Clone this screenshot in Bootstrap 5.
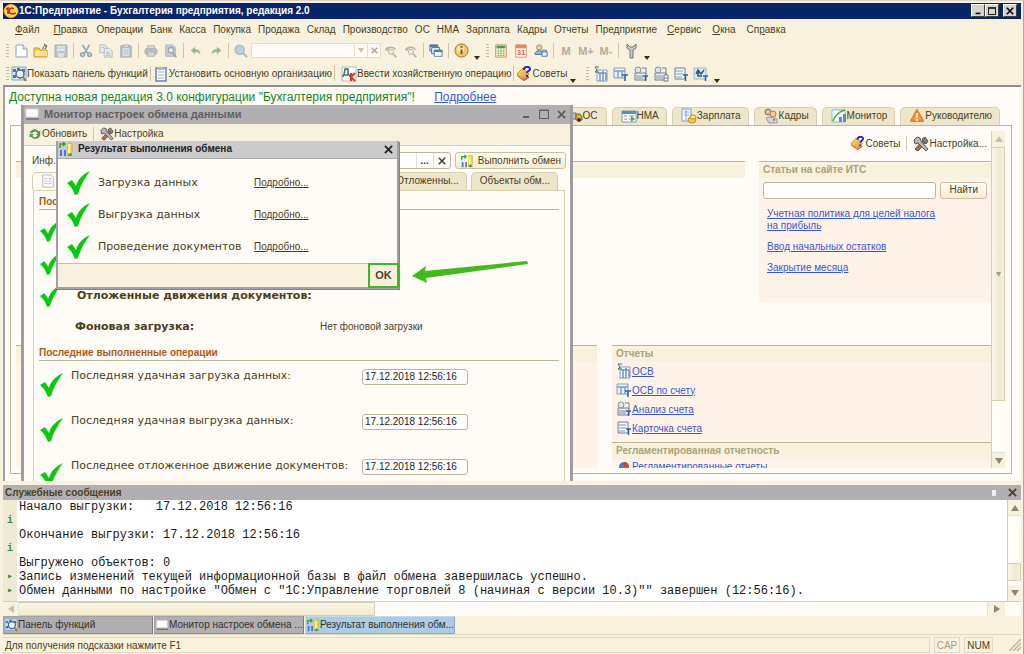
<!DOCTYPE html>
<html lang="ru">
<head>
<meta charset="utf-8">
<meta name="viewport" content="width=device-width, initial-scale=1">
<title>1С:Предприятие - Бухгалтерия предприятия, редакция 2.0</title>
<link href="https://cdn.jsdelivr.net/npm/bootstrap@5.3.0/dist/css/bootstrap.min.css" rel="stylesheet">
<style>
:root{--cream:#f7f1de;--paper:#fffbf7;--ink:#4b3f1c;--line:#bdb694;--steel:#b1afb2;--blush:#fff3e9}
body{font:10px/14px "Liberation Sans",Arial,sans-serif;color:var(--ink);background:var(--cream)}
button,input{font:inherit;color:inherit}
button{border:0;background:none;padding:0;white-space:nowrap}
svg{flex:none;display:block}
.i16{width:16px;height:16px}
.app{height:100vh;padding:2px 2px 0 3px;border-top:1px solid #d5d2c8;border-right:1px solid #aaa9ad}
.titlebar{height:16px;background:#0a246a;color:#fff;font-weight:700}
.sysbtn{width:14px;height:13px;background:#d6d3ce;border:1px solid #fff;border-right-color:#404040;border-bottom-color:#404040;color:#000}
.menubar{height:22px;padding-left:9px}
.menubar a{color:inherit;text-decoration:none;padding:0 4px 0 3px}
.menubar a.wide{padding:0 5px 0 6px}
.bar{height:21px}.bar.second{height:24px;padding-top:2px}
.grip{width:8px;height:13px;background:repeating-linear-gradient(#c2bb99 0 1px,transparent 1px 3px) center/3px 100% no-repeat}
.tool{width:20px;height:20px;display:flex;align-items:center;justify-content:center}
.tool.off{opacity:.5}
.tool.mem{font-weight:700;color:#b3ad9a;font-size:11px}
.div{width:5px;height:15px;background:linear-gradient(#cdc6a8,#cdc6a8) center/1px 100% no-repeat}
.caret{width:12px;height:18px;display:flex;align-items:flex-end;justify-content:center}
.caret::after{content:"";border:3px solid transparent;border-top:4px solid #3c2d10;border-bottom:0}
.combo{width:130px;height:15px;border:1px solid #e5dfca;background:var(--paper)}
.combo input{border:0;background:none;min-width:0;padding:0;height:13px}
.combo button{width:13px;flex:none;border-left:1px solid #e5dfca;color:#a9a490;font-weight:700;display:flex;align-items:center;justify-content:center}
.workspace{background:var(--paper);border:2px solid #8f8d8e;border-width:2px 0 0 2px;border-left-color:#a3a0a3;position:relative;overflow:hidden;padding:0 9px 7px 4px}
.notice{font-size:12px;line-height:16px;padding:2px 0 2px 0;color:#168423}
a.lnk,.notice a{color:#3656dd;text-decoration:underline}
.ftab{height:18px;border:1px solid #d6cfae;border-bottom:0;border-radius:5px 5px 0 0;background:#ede6cb;padding:0 7px 0 8px}
.tabs-main{gap:5px;padding-right:12px}
.page{border:1px solid var(--line);margin-left:1px;padding:5px 6px 5px 5px;background:var(--paper)}
.vscroll{width:14px;border-left:1px solid #d5cfb3;background:#fffdf6}
.vscroll .end{height:16px;background:var(--cream)}
.thumb{background:linear-gradient(90deg,#faf6e8,#efe8cb 60%,#f7f1d8);border:1px solid #d5cfb3;border-left:0}
.up,.down,.left,.right{border:4px solid transparent;width:0;height:0}
.up{border-bottom:6px solid #8b8774;border-top:0}.down{border-top:6px solid #8b8774;border-bottom:0}
.left{border-right:6px solid #c5bfa6;border-left:0}.right{border-left:6px solid #8b8774;border-right:0}
.combo .down{border-width:5px 3px 0;opacity:.5}
.pale{opacity:.45}
.pane-a{display:grid;grid-template-columns:1fr 232px;column-gap:14px;height:184px;flex:none;align-items:start}
.pane-b{display:grid;grid-template-columns:1fr 379px;column-gap:15px}
.sect{border-top:1px solid var(--line)}
.sect h2{margin:0;font-size:10px;line-height:15px;height:16px;font-weight:700;color:#aaa477;background:var(--cream);padding-left:4px}
.blush{background:var(--blush)}
.articles{padding:9px 8px 28px;gap:9px;line-height:12px}
.soft{border:1px solid #c9c19b;border-radius:3px;background:linear-gradient(#fffdf5,#f3ecd3)}
.field{border:1px solid var(--line);border-radius:3px;background:#fff;min-width:0;padding:0 2px}
.win{position:absolute}
.monitor{left:16px;top:18px;width:552px;height:388px;border:3px solid #9f9ca0;border-top:0;background:var(--paper)}
.monitor>*{flex:none}
.monitor>header{height:19px;background:var(--steel);color:#615d5d;font-weight:700;font-size:11px}
.monitor .tools{height:22px;background:var(--cream);border-bottom:1px solid #d5cfb3}
.sheet{border:1px solid #d8d1ae;border-bottom:0;margin:0 5px 0 9px;padding:0 5px}
.grouphead{margin:0;font-size:10px;line-height:13px;font-weight:700;color:#a95a16;border-bottom:1px solid var(--line);padding-bottom:1px}
.verd{font-family:"DejaVu Sans",Verdana,sans-serif;font-size:11px}
.orow{height:45px}
.orow .verd{width:291px}
.result{left:51px;top:54px;width:343px;height:148px;border:2px solid #a2a0a3;border-top:0;background:var(--paper);box-shadow:1px 1px 0 #858386}
.result>*{flex:none}
.result>header{height:18px;background:#cbcbcd;color:#222;font-weight:700;border-bottom:1px solid #aaa}
.rrow{height:32px;padding-left:8px}
.rrow .verd{width:156px}
.rrow a{color:inherit}
.result>footer{height:24px;background:var(--cream);border-top:1px solid #c9c19b;margin-top:auto}
.ok{width:31px;height:25px;border:2px solid #44b629;font-weight:700;font-size:11px;margin:-1px -2px 0 0;background:var(--cream)}
.arrow{left:407px;top:173px}
.msgs{margin-top:4px}
.msgs>header{height:15px;background:var(--steel);font-weight:700;padding-left:2px}
.pin{width:4px;height:6px;background:#eee}
.msgbody{height:102px;background:#fff;font:12px/14px "Liberation Mono","Courier New",monospace;color:#1a1a1a;border-bottom:1px solid #d5cfb3}
.msgbody pre{margin:0;font:inherit;overflow:hidden}
.msgbody pre.gutter{width:14px;margin-right:2px;flex:none;background:#efead4;color:#3f8a37;font-weight:700;font-size:10px;text-align:center}
.hscroll{height:14px;background:var(--paper)}
.task{width:150px;height:18px;background:#b1afb2;border:1px solid #a3a1a4;border-right-color:#7e7c7f;border-bottom-color:#8f8d8f;color:#363029;overflow:hidden}
.task.on{background:#aecbe3;border-color:#c2d9ea #8dabc4 #8dabc4 #c2d9ea}
.status{height:20px;border-top:1px solid #dfd9c0}
.cell{height:16px;border:1px solid #e0dac1;padding:0 2px;line-height:15px}
</style>
</head>
<body>
<svg width="0" height="0" class="position-absolute" aria-hidden="true">
<defs>
<linearGradient id="gold" x1="0" y1="0" x2="1" y2="1"><stop offset="0" stop-color="#ffe98a"/><stop offset="1" stop-color="#dd8a18"/></linearGradient>
<symbol id="doc" viewBox="0 0 16 16"><path d="M3 2h7l4 4v8H3z" fill="#fff" stroke="#8ba3bd"/><path d="M10 2v4h4" fill="#dce8f2" stroke="#8ba3bd"/></symbol>
<symbol id="sheeticon" viewBox="0 0 16 16"><path d="M2 1h9l3 3v11H2z" fill="#fff" stroke="#a9a9b4"/><path d="M4 5h3M4 8h3M4 11h3" stroke="#a9b4c4"/><path d="M9 5h3M9 8h3M9 11h3" stroke="#dc8e9c"/></symbol>
<symbol id="folder" viewBox="0 0 16 16"><path d="M1 5h5l1 2h7v7H1z" fill="#f4cd5c" stroke="#c8963a"/><path d="M2 8h12v5H2z" fill="#fbe291"/><path d="M10 6c0-3 1-3 3-3M11 1l3 2-2 3" fill="none" stroke="#55503a"/></symbol>
<symbol id="disk" viewBox="0 0 16 16"><path d="M2 2h12v12H2z" fill="#7f98b8" stroke="#58708e"/><path d="M4 3h8v5H4z" fill="#cfdbe8"/><path d="M5 10h6v4H5z" fill="#ccd"/><path d="M4 5h8" stroke="#92a5ba"/></symbol>
<symbol id="cut" viewBox="0 0 16 16"><path d="M4 1l6 10M12 1L6 11" stroke="#35658f" stroke-width="2"/><g fill="none" stroke="#35658f" stroke-width="2"><circle cx="4" cy="12" r="2"/><circle cx="12" cy="12" r="2"/></g></symbol>
<symbol id="copy" viewBox="0 0 16 16"><g fill="#dde8f4" stroke="#5a7eab"><path d="M1 1h6l2 2v7H1z"/><path d="M6 5h6l3 3v7H6z"/></g><path d="M8 9h4M8 11h5M8 13h5M3 4h3" stroke="#5a7eab"/></symbol>
<symbol id="clip" viewBox="0 0 16 16"><path d="M2 2h12v13H2z" fill="#708db8" stroke="#4c6795"/><path d="M4 4h8v10H4z" fill="#b9cbe2"/><path d="M5 1h6v3H5z" fill="#bcc7d5" stroke="#607287"/><path d="M6 7h5M6 9h5M6 11h5" stroke="#7d98bd"/></symbol>
<symbol id="print" viewBox="0 0 16 16"><path d="M4 2h8v4H4z" fill="#c5ccd6" stroke="#687688"/><rect x="1" y="5" width="14" height="7" rx="3" fill="#7c8a9e" stroke="#5d697b"/><path d="M4 9h8v5H4z" fill="#b4bfcc" stroke="#687688"/></symbol>
<symbol id="view" viewBox="0 0 16 16"><path d="M2 1h8l3 3v10H2z" fill="#8fa9cb" stroke="#617da4"/><circle cx="8" cy="7" r="3" fill="#e8f2fa" stroke="#495f7c" stroke-width="1.5"/><path d="M10 10l4 5" stroke="#495f7c" stroke-width="2"/></symbol>
<symbol id="undo" viewBox="0 0 16 16"><path d="M2 7l5-4v3c4 0 6 2 6 6-1-2-3-3-6-3v3z" fill="#3f8258"/></symbol>
<symbol id="lens" viewBox="0 0 16 16"><circle cx="6.500" cy="6.500" r="5" fill="#8cb2df" stroke="#6486b0" stroke-width="2"/><path d="M10 10l5 5" stroke="#8b8175" stroke-width="2.500"/></symbol>
<symbol id="again" viewBox="0 0 16 16"><path d="M1 7c1-5 11-6 13 0l-3-1c-2-2-5-2-7 2z" fill="#727e75"/><circle cx="8" cy="9" r="3" fill="#dee4e2" stroke="#727e75"/><path d="M10 11l4 4" stroke="#727e75" stroke-width="2"/></symbol>
<symbol id="wins" viewBox="0 0 16 16"><g fill="#dbeaf8" stroke="#426f9e"><path d="M1 1h9v7H1z"/><path d="M3 4h9v7H3z"/><path d="M6 7h9v7H6z" fill="#fff"/></g><path d="M1 2h9M6 8h9" stroke="#426f9e" stroke-width="2"/></symbol>
<symbol id="info" viewBox="0 0 16 16"><circle cx="8" cy="8" r="7" fill="#f3c667" stroke="#9d762c"/><circle cx="7" cy="6" r="4" fill="#fff" opacity=".45"/><path d="M8 7v5M8 3v2" stroke="#79531a" stroke-width="2"/></symbol>
<symbol id="calc" viewBox="0 0 16 16"><path d="M2 1h12v14H2z" fill="#fff5d7" stroke="#b48d4d"/><path d="M3 2h10v3H3z" fill="#4e9856"/><path d="M4 7h2M7 7h2M10 7h2M4 9h2M7 9h2M4 11h2M7 11h2M4 13h2M7 13h2" stroke="#4e9856"/><path d="M10 9h2M10 11h2M10 13h2" stroke="#d05634"/></symbol>
<symbol id="cal" viewBox="0 0 16 16"><path d="M2 1h12v14H2z" fill="#fff" stroke="#cc8a68"/><path d="M2 1h12v4H2z" fill="#e78b5c"/><text x="3" y="13" font-size="9" font-weight="700" fill="#dc5936" font-family="Liberation Sans">31</text></symbol>
<symbol id="user" viewBox="0 0 16 16"><circle cx="6" cy="4" r="3" fill="#ecd28a" stroke="#77879a"/><path d="M1 12c0-6 10-6 10 0z" fill="#8eb2d6" stroke="#567694"/><path d="M9 9h6v5H9z" fill="#e8eef5" stroke="#466c98"/><path d="M10 9V7h4v2" fill="none" stroke="#466c98"/></symbol>
<symbol id="wrench" viewBox="0 0 16 16"><path d="M4 1v4l3 2v8h3V7l3-2V1l-3 3H7z" fill="#c9cbc5" stroke="#72746e"/></symbol>
<symbol id="panel" viewBox="0 0 16 16"><path d="M1 1h14v13H1z" fill="#dceafa" stroke="#7fa2cf"/><path d="M2 3h3v3H2zM6 2h3v2H6zM11 3h3v3h-3zM2 9h3v3H2z" fill="#4177c6"/><circle cx="9" cy="8" r="4" fill="#eef7ff" stroke="#516984" stroke-width="1.500"/><path d="M12 11l3 4" stroke="#b37426" stroke-width="2"/></symbol>
<symbol id="board" viewBox="0 0 16 16"><path d="M3 2h10v13H3z" fill="#fff" stroke="#6481b3" stroke-width="1.500"/><path d="M5 1h6v3H5z" fill="#a6b6d0"/><path d="M5 6h6M5 9h6M5 12h6" stroke="#97a9c8"/></symbol>
<symbol id="dk" viewBox="0 0 16 16"><path d="M1 1h14v14H1z" fill="#fff" stroke="#bcb8b4"/><path d="M2 9h7M3 9l1-6h3v6M2 9v2M9 9v2" fill="none" stroke="#317f5c" stroke-width="1.600"/><path d="M10 7v8M14 7l-4 4 4 4" fill="none" stroke="#df302b" stroke-width="2"/></symbol>
<symbol id="advice" viewBox="0 0 16 16"><path d="M1 8l6-6 6 6-5 6z" fill="url(#gold)" stroke="#d18a1c"/><path d="M1 9l7 5 5-4v2l-5 3-7-5z" fill="#c6502a"/><path d="M8 4c0-4 6-4 6-1 0 2-3 2-3 4M11 9v2" fill="none" stroke="#2420ce" stroke-width="2"/></symbol>
<symbol id="rep1" viewBox="0 0 16 16"><path d="M4 4h10v11H4z" fill="#fff" stroke="#7f98b8"/><path d="M5 7h8M7 7v8M10 5v10M13 7v7" stroke="#6a92c6" stroke-width="1.500"/><path d="M6 1H2l2 3-2 2h4" fill="none" stroke="#367368"/></symbol>
<symbol id="rep2" viewBox="0 0 16 16"><path d="M1 2h11v10H1z" fill="#eaf1f8" stroke="#8b9bb2"/><path d="M1 5h11M5 5v7M9 5v7" stroke="#7b9bcb" stroke-width="1.500"/><path d="M9 9h6M12 9v6" stroke="#2864a4" stroke-width="1.500"/></symbol>
<symbol id="rep3" viewBox="0 0 16 16"><path d="M2 7h11v7H2z" fill="#e9eef3" stroke="#73808f"/><path d="M3 10h7M3 12h7" stroke="#8390a2"/><circle cx="5" cy="4" r="3" fill="#dce5ee" stroke="#8390a0"/><path d="M9 2h4v6" fill="none" stroke="#73808f"/><path d="M10 10h5M12.500 10v5" stroke="#2864a4" stroke-width="1.500"/></symbol>
<symbol id="rep3b" viewBox="0 0 16 16"><path d="M2 7h11v7H2z" fill="#e9eef3" stroke="#73808f"/><path d="M3 10h7M3 12h7" stroke="#8390a2"/><circle cx="5" cy="4" r="3" fill="#dce5ee" stroke="#8390a0"/><path d="M9 2h4v6" fill="none" stroke="#73808f"/><path d="M11 9h4v6h-4zM11 12h4" fill="#fff" stroke="#667890"/></symbol>
<symbol id="rep4" viewBox="0 0 16 16"><path d="M2 2h10v11H2z" fill="#f4f7fa" stroke="#70839a"/><path d="M2 5h8M3 8h7M3 11h6" stroke="#849bb6"/><path d="M10 9h5M12.500 9v6" stroke="#2864a4" stroke-width="1.500"/></symbol>
<symbol id="rep5" viewBox="0 0 16 16"><path d="M1 2h12v11H1z" fill="#dfe9f2" stroke="#a3b3c6"/><path d="M3 8l2-4 3 4 3-4M5 5v5h4" fill="none" stroke="#365675" stroke-width="1.500"/><path d="M10 10h5M12.500 10v5" stroke="#2864a4" stroke-width="1.500"/></symbol>
<symbol id="tools" viewBox="0 0 16 16"><path d="M2 13L11 3l3 2L5 15z" fill="#a5714e" stroke="#66483b"/><path d="M1 4l3-3 3 1 1 3 7 8-2 2-8-8-3 1z" fill="#b5b5b5" stroke="#555"/><path d="M9 3l3-2 3 4-2 3z" fill="#858585" stroke="#555"/></symbol>
<symbol id="screen" viewBox="0 0 16 16"><path d="M2 3h12v8H2z" fill="#fff" stroke="#d8d8dc"/><path d="M2 13h13" stroke="#757176" stroke-width="1.500"/></symbol>
<symbol id="refresh" viewBox="0 0 16 16"><path d="M2 7c1-5 8-6 10-2l2-1v5H9l2-2c-2-3-5-2-6 0zM14 9c-1 5-8 6-10 2l-2 1V8h5l-2 2c2 3 5 2 6-1z" fill="#4f9651"/></symbol>
<symbol id="exchange" viewBox="0 0 16 16"><path d="M10 2h4v10l-2 2h-2z" fill="#f3dc51" stroke="#cdb036"/><path d="M10 3h2v9h-2z" fill="#fff4a4"/><path d="M2 9h2v6H2zM6 9h2v6H6z" fill="#4a79d3"/><path d="M2 7V3h4M5 1l2 2-2 2M10 14h4M12 12v3" fill="none" stroke="#3b9f37" stroke-width="1.500"/></symbol>
<symbol id="check" viewBox="0 0 24 24"><path d="M1 12l5-3 4 6C12 8 16 4 24 0 18 8 14 16 12 23l-3 1C7 19 5 15 1 12z" fill="#0ac812"/></symbol>
<symbol id="truck" viewBox="0 0 16 16"><path d="M1 5h8v6H1z" fill="#b6c2c8" stroke="#727c82"/><path d="M9 6h4l2 3v3H9z" fill="#ddb23f" stroke="#765e24"/><circle cx="4" cy="12" r="2" fill="#333"/><circle cx="12" cy="12" r="2" fill="#333"/></symbol>
<symbol id="nma" viewBox="0 0 16 16"><path d="M1 3h14v11H1z" fill="#f8fbff" stroke="#829bb5"/><path d="M1 3h14v3H1z" fill="#5391c4"/><path d="M3 8h3M3 11h3M8 8h5M8 11h5" stroke="#899e9c"/><path d="M10 8l4 3-4 3z" fill="#50a554"/></symbol>
<symbol id="salary" viewBox="0 0 16 16"><path d="M1 1h9v12H1z" fill="#f2f7ff" stroke="#7b9dcc"/><path d="M3 4h5M3 7h5M5 2v10" stroke="#8faad2"/><ellipse cx="11" cy="12" rx="4" ry="3" fill="#f8cb46" stroke="#c18f24"/><ellipse cx="12" cy="9" rx="3" ry="2" fill="#ffe47b" stroke="#c18f24"/></symbol>
<symbol id="staff" viewBox="0 0 16 16"><circle cx="5" cy="4" r="3" fill="#e9bd8f" stroke="#876a54"/><circle cx="10" cy="6" r="3" fill="#f3c9a0" stroke="#a9853d"/><path d="M3 10l4-1 7 2v4H6z" fill="#d3d5da" stroke="#999"/><path d="M10 11l1 3 1-3" fill="#ce4537"/></symbol>
<symbol id="chart" viewBox="0 0 16 16"><path d="M1 2h13v12H1z" fill="#fff" stroke="#8fb5cb"/><path d="M8 14V9h3v5zM12 14V6h3v8z" fill="#4f93cc"/><path d="M2 13C4 7 7 4 14 2" fill="none" stroke="#3da74b" stroke-width="1.500"/></symbol>
<symbol id="warn" viewBox="0 0 16 16"><path d="M8 2l6 11H2z" fill="#f9992c" stroke="#f0822b" stroke-linejoin="round" stroke-width="2"/><path d="M8 5v5M8 11v2" stroke="#fff" stroke-width="1.700"/></symbol>
<symbol id="pie" viewBox="0 0 16 16"><circle cx="8" cy="8" r="5" fill="#3e7fce"/><path d="M8 8V3a5 5 0 015 5z" fill="#d83d32"/><path d="M8 8h5a5 5 0 01-5 5z" fill="#46a54c"/></symbol>
<symbol id="cross" viewBox="0 0 10 10"><path d="M1 1l8 8M9 1L1 9" stroke="currentColor" stroke-width="2"/></symbol>
<symbol id="box" viewBox="0 0 10 10"><path d="M.5 1.500h9v8h-9zM0 1h10" fill="none" stroke="currentColor" stroke-width="1.200"/></symbol>
<symbol id="min" viewBox="0 0 10 10"><path d="M2 8h6" stroke="currentColor" stroke-width="2"/></symbol>
</defs></svg>

<div class="app d-flex flex-column">
<header class="titlebar d-flex align-items-center">
  <svg width="16" height="14" viewBox="0 0 16 14"><ellipse cx="8" cy="7" rx="7" ry="6.500" fill="#ffde58" stroke="#f4a83c"/><path d="M3 5l2-1v6M11 5c-3-2-5 0-5 2s2 4 7 2" fill="none" stroke="#d92323" stroke-width="1.600"/></svg>
  <span class="flex-grow-1">1С:Предприятие - Бухгалтерия предприятия, редакция 2.0</span>
  <div class="d-flex">
    <button class="sysbtn" aria-label="Свернуть"><svg width="8" height="8" class="mx-auto"><use href="#min"/></svg></button>
    <button class="sysbtn me-1" aria-label="Развернуть"><svg width="8" height="8" class="mx-auto"><use href="#box"/></svg></button>
    <button class="sysbtn me-1" aria-label="Закрыть"><svg width="8" height="8" class="mx-auto"><use href="#cross"/></svg></button>
  </div>
</header>

<nav class="menubar d-flex align-items-center">
  <a href="#" class="pe-2"><u>Ф</u>айл</a><a href="#" class="wide"><u>П</u>равка</a><a href="#" class="ps-1">Операции</a><a href="#">Банк</a><a href="#">Касса</a><a href="#">Покупка</a><a href="#">Продажа</a><a href="#">Склад</a><a href="#">Производство</a><a href="#">ОС</a><a href="#">НМА</a><a href="#">Зарплата</a><a href="#">Кадры</a><a href="#">Отчеты</a><a href="#">Предприятие</a><a href="#" class="wide"><u>С</u>ервис</a><a href="#" class="wide"><u>О</u>кна</a><a href="#" class="wide">Сп<u>р</u>авка</a>
</nav>

<div class="bar d-flex align-items-center">
  <span class="grip me-n1"></span>
  <button class="tool" aria-label="Новый"><svg class="i16"><use href="#doc"/></svg></button><button class="tool" aria-label="Открыть"><svg class="i16"><use href="#folder"/></svg></button><button class="tool off" aria-label="Сохранить"><svg class="i16"><use href="#disk"/></svg></button><span class="div"></span>
  <button class="tool off" aria-label="Вырезать"><svg width="14" height="14"><use href="#cut"/></svg></button><button class="tool off" aria-label="Копировать"><svg width="14" height="14"><use href="#copy"/></svg></button><button class="tool off" aria-label="Вставить"><svg width="14" height="14"><use href="#clip"/></svg></button><span class="div"></span>
  <button class="tool off" aria-label="Печать"><svg width="14" height="14"><use href="#print"/></svg></button><button class="tool off" aria-label="Просмотр"><svg width="14" height="14"><use href="#view"/></svg></button><span class="div"></span>
  <button class="tool off" aria-label="Отменить"><svg width="14" height="14"><use href="#undo"/></svg></button><button class="tool off" aria-label="Вернуть"><svg width="14" height="14" viewBox="0 0 16 16"><path d="M14 7L9 3v3c-4 0-6 2-6 6 1-2 3-3 6-3v3z" fill="#3f8258"/></svg></button><span class="div"></span>
  <button class="tool off" aria-label="Найти"><svg width="14" height="14"><use href="#lens"/></svg></button>
  <div class="combo d-flex"><input type="text" aria-label="Строка поиска" class="flex-grow-1"><button aria-label="Список"><span class="down"></span></button><button aria-label="Очистить"><svg width="7" height="7"><use href="#cross"/></svg></button></div>
  <button class="tool off" aria-label="Найти следующий"><svg width="14" height="14"><use href="#again"/></svg></button><button class="tool off" aria-label="Найти предыдущий"><svg width="14" height="14"><use href="#again"/></svg></button><span class="div"></span>
  <button class="tool" aria-label="Окна"><svg width="14" height="14"><use href="#wins"/></svg></button><span class="div"></span>
  <button class="tool" aria-label="Справка"><svg width="15" height="15"><use href="#info"/></svg></button><span class="caret"></span><span class="grip"></span>
  <button class="tool" aria-label="Калькулятор"><svg width="14" height="14"><use href="#calc"/></svg></button><button class="tool" aria-label="Календарь"><svg width="14" height="14"><use href="#cal"/></svg></button><button class="tool" aria-label="Пользователи"><svg width="14" height="14"><use href="#user"/></svg></button><span class="div"></span>
  <button class="tool mem">M</button><button class="tool mem">M+</button><button class="tool mem">M-</button><span class="div"></span>
  <button class="tool" aria-label="Сервис"><svg class="i16"><use href="#wrench"/></svg></button><span class="caret"></span>
</div>

<div class="bar second d-flex align-items-center">
  <span class="grip"></span>
  <button class="d-flex align-items-center"><svg class="i16"><use href="#panel"/></svg>Показать панель функций</button><span class="div"></span>
  <button class="d-flex align-items-center"><svg class="i16"><use href="#board"/></svg>Установить основную организацию</button><span class="div me-1"></span>
  <button class="d-flex align-items-center"><svg class="i16"><use href="#dk"/></svg>Ввести хозяйственную операцию</button><span class="div"></span>
  <button class="d-flex align-items-center"><svg class="i16"><use href="#advice"/></svg>Советы</button><span class="caret"></span><span class="grip ms-1"></span>
  <button class="tool" aria-label="ОСВ"><svg class="i16"><use href="#rep1"/></svg></button><button class="tool" aria-label="ОСВ по счету"><svg class="i16"><use href="#rep2"/></svg></button><button class="tool" aria-label="Анализ счета"><svg class="i16"><use href="#rep3"/></svg></button><button class="tool" aria-label="Обороты"><svg class="i16"><use href="#rep3b"/></svg></button><button class="tool" aria-label="Карточка счета"><svg class="i16"><use href="#rep4"/></svg></button><button class="tool" aria-label="Диаграмма"><svg class="i16"><use href="#rep5"/></svg></button><span class="caret"></span>
</div>

<main class="workspace flex-grow-1 d-flex flex-column" style="min-height:0">
  <div class="notice">Доступна новая редакция 3.0 конфигурации "Бухгалтерия предприятия"! <a href="#" class="ms-3">Подробнее</a></div>
  <div class="tabs-main d-flex justify-content-end">
    <button class="ftab d-flex align-items-center px-1"><svg class="i16"><use href="#truck"/></svg><span class="pe-1">ОС</span></button>
    <button class="ftab d-flex align-items-center"><svg class="i16"><use href="#nma"/></svg>НМА</button>
    <button class="ftab d-flex align-items-center"><svg class="i16"><use href="#salary"/></svg>Зарплата</button>
    <button class="ftab d-flex align-items-center"><svg class="i16"><use href="#staff"/></svg>Кадры</button>
    <button class="ftab d-flex align-items-center"><svg class="i16"><use href="#chart"/></svg>Монитор</button>
    <button class="ftab d-flex align-items-center"><svg class="i16"><use href="#warn"/></svg>Руководителю</button>
  </div>
  <div class="page flex-grow-1 d-flex" style="min-height:0">
    <div class="flex-grow-1 d-flex flex-column overflow-hidden">
      <div class="d-flex justify-content-end align-items-center pe-1 pb-1 flex-shrink-0" style="height:30px">
        <button class="d-flex align-items-center"><svg width="15" height="15"><use href="#advice"/></svg>Советы</button><span class="div mx-1"></span>
        <button class="d-flex align-items-center"><svg class="i16"><use href="#tools"/></svg>Настройка...</button>
      </div>
      <div class="pane-a">
        <section class="sect"><h2></h2></section>
        <section class="sect blush">
          <h2>Статьи на сайте ИТС</h2>
          <form class="d-flex p-1 pb-0"><input type="text" class="field flex-grow-1 me-1" style="height:17px" aria-label="Поиск статей"><button type="button" class="soft px-2">Найти</button></form>
          <div class="articles d-flex flex-column">
            <a href="#" class="lnk pe-5">Учетная политика для целей налога<br>на прибыль</a><a href="#" class="lnk">Ввод начальных остатков</a><a href="#" class="lnk">Закрытие месяца</a>
          </div>
        </section>
      </div>
      <div class="pane-b flex-grow-1">
        <section class="sect blush"><h2></h2></section>
        <section class="blush">
          <div class="sect"><h2>Отчеты</h2></div>
          <div class="d-flex flex-column px-1 pb-1" style="line-height:19px">
            <a href="#" class="lnk d-flex align-items-center"><svg class="i16"><use href="#rep1"/></svg>ОСВ</a>
            <a href="#" class="lnk d-flex align-items-center"><svg class="i16"><use href="#rep2"/></svg>ОСВ по счету</a>
            <a href="#" class="lnk d-flex align-items-center"><svg class="i16"><use href="#rep3"/></svg>Анализ счета</a>
            <a href="#" class="lnk d-flex align-items-center"><svg class="i16"><use href="#rep4"/></svg>Карточка счета</a>
          </div>
          <div class="sect"><h2>Регламентированная отчетность</h2></div>
          <a href="#" class="lnk d-flex align-items-center px-1"><svg class="i16"><use href="#pie"/></svg>Регламентированные отчеты</a>
        </section>
      </div>
    </div>
    <div class="vscroll d-flex flex-column">
      <div class="end d-flex align-items-center justify-content-center"><span class="up pale"></span></div>
      <div class="thumb d-flex align-items-center justify-content-center" style="flex:253"><span class="pale">▾</span></div>
      <div style="flex:52"></div>
      <div class="end d-flex align-items-center justify-content-center border-top"><span class="down"></span></div>
    </div>
  </div>

  <section class="win monitor d-flex flex-column">
    <header class="d-flex align-items-center"><svg class="i16 me-1"><use href="#screen"/></svg><span class="flex-grow-1">Монитор настроек обмена данными</span>
      <button class="me-2" aria-label="Свернуть"><svg width="10" height="10"><use href="#min"/></svg></button><button class="me-2" aria-label="Развернуть"><svg width="10" height="10"><use href="#box"/></svg></button><button class="me-1" aria-label="Закрыть"><svg width="9" height="9"><use href="#cross"/></svg></button>
    </header>
    <div class="tools d-flex align-items-center ps-1">
      <button class="d-flex align-items-center"><svg width="14" height="14"><use href="#refresh"/></svg>Обновить</button><span class="div mx-1"></span><button class="d-flex align-items-center"><svg width="14" height="14"><use href="#tools"/></svg>Настройка</button>
    </div>
    <div class="d-flex align-items-center pt-1 ps-2 pe-1" style="height:26px">
      <label for="base" class="me-2">Инф.</label>
      <div class="field d-flex flex-grow-1 pe-0 me-1" style="height:17px"><input id="base" type="text" class="border-0 flex-grow-1 p-0"><button class="border-start px-1 fw-bold">...</button><button class="border-start px-1" aria-label="Очистить"><svg width="8" height="8"><use href="#cross"/></svg></button></div>
      <button class="soft d-flex align-items-center px-1" style="height:17px"><svg width="14" height="14" class="me-1"><use href="#exchange"/></svg>Выполнить обмен</button>
    </div>
    <div class="d-flex ps-2 pe-2">
      <button class="ftab" style="background:var(--paper)" aria-label="Основные"><svg width="14" height="14" class="me-4"><use href="#sheeticon"/></svg></button>
      <button class="ftab ms-auto">Отложенны...</button><button class="ftab ms-1 me-1">Объекты обм...</button>
    </div>
    <div class="sheet flex-grow-1">
      <h3 class="grouphead pt-1">Пос</h3>
      <div class="d-flex align-items-center" style="height:42px"><svg width="22" height="22"><use href="#check"/></svg></div>
      <div class="d-flex align-items-center" style="height:24px"><svg width="22" height="22"><use href="#check"/></svg></div>
      <div class="d-flex align-items-center" style="height:40px"><svg width="22" height="22" class="me-3"><use href="#check"/></svg><span class="verd fw-bold">Отложенные движения документов:</span></div>
      <div class="d-flex align-items-center" style="height:22px;padding-left:36px"><span class="verd fw-bold" style="width:245px">Фоновая загрузка:</span><span>Нет фоновой загрузки</span></div>
      <h3 class="grouphead pt-2 mb-1">Последние выполненные операции</h3>
      <div class="orow d-flex align-items-start"><svg class="mt-2 me-2" width="24" height="24"><use href="#check"/></svg><label class="verd pt-1" for="d1">Последняя удачная загрузка данных:</label><input id="d1" class="field mt-1" value="17.12.2018 12:56:16" style="width:106px;color:#222"></div>
      <div class="orow d-flex align-items-start"><svg class="mt-2 me-2" width="24" height="24"><use href="#check"/></svg><label class="verd pt-1" for="d2">Последняя удачная выгрузка данных:</label><input id="d2" class="field mt-1" value="17.12.2018 12:56:16" style="width:106px;color:#222"></div>
      <div class="orow d-flex align-items-start"><svg class="mt-2 me-2" width="24" height="24"><use href="#check"/></svg><label class="verd pt-1" for="d3">Последнее отложенное движение документов:</label><input id="d3" class="field mt-1" value="17.12.2018 12:56:16" style="width:106px;color:#222"></div>
    </div>
  </section>

  <section class="win result d-flex flex-column">
    <header class="d-flex align-items-center"><svg class="i16"><use href="#exchange"/></svg><span class="flex-grow-1 ps-1">Результат выполнения обмена</span><button class="me-1" aria-label="Закрыть"><svg width="9" height="9"><use href="#cross"/></svg></button></header>
    <div class="pt-2">
      <div class="rrow d-flex align-items-center"><svg class="me-2" width="24" height="24"><use href="#check"/></svg><span class="verd">Загрузка данных</span><a href="#">Подробно...</a></div>
      <div class="rrow d-flex align-items-center"><svg class="me-2" width="24" height="24"><use href="#check"/></svg><span class="verd">Выгрузка данных</span><a href="#">Подробно...</a></div>
      <div class="rrow d-flex align-items-center"><svg class="me-2" width="24" height="24"><use href="#check"/></svg><span class="verd">Проведение документов</span><a href="#">Подробно...</a></div>
    </div>
    <footer class="d-flex justify-content-end"><button class="ok">OK</button></footer>
  </section>
  <svg class="win arrow" width="118" height="24" viewBox="0 0 118 24"><path d="M0 16L14 6l-1 5L115 1l1 3L14 18l1 5z" fill="#43b91d"/></svg>
</main>

<section class="msgs">
  <header class="d-flex align-items-center"><span class="flex-grow-1">Служебные сообщения</span><span class="pin me-2"></span><button class="ms-1 me-1" aria-label="Закрыть"><svg width="9" height="9"><use href="#cross"/></svg></button></header>
  <div class="msgbody d-flex">
    <pre class="gutter">

i

i

▸
▸</pre>
    <pre class="flex-grow-1">Начало выгрузки:   17.12.2018 12:56:16

Окончание выгрузки: 17.12.2018 12:56:16

Выгружено объектов: 0
Запись изменений текущей информационной базы в файл обмена завершилась успешно.
Обмен данными по настройке "Обмен с "1С:Управление торговлей 8 (начиная с версии 10.3)"" завершен (12:56:16).</pre>
    <div class="vscroll d-flex flex-column">
      <div class="end d-flex align-items-center justify-content-center border-bottom"><span class="up"></span></div>
      <div class="flex-grow-1"></div>
      <div class="thumb" style="height:18px"></div>
      <div class="end d-flex align-items-center justify-content-center mt-1"><span class="down"></span></div>
    </div>
  </div>
  <div class="hscroll d-flex">
    <div class="d-flex align-items-center justify-content-center border-end" style="width:16px;background:var(--cream)"><span class="left"></span></div>
    <div class="thumb" style="width:35%;background:linear-gradient(#faf6e8,#f1eacb)"></div>
    <div class="flex-grow-1"></div>
    <div class="d-flex align-items-center justify-content-center border-start me-3" style="width:18px;background:var(--cream)"><span class="right"></span></div>
  </div>
</section>

<nav class="d-flex" style="gap:1px">
  <button class="task d-flex align-items-center"><svg width="14" height="14"><use href="#panel"/></svg>Панель функций</button>
  <button class="task d-flex align-items-center"><svg width="14" height="14"><use href="#screen"/></svg>Монитор настроек обмена ...</button>
  <button class="task on d-flex align-items-center"><svg width="14" height="14"><use href="#exchange"/></svg>Результат выполнения обм...</button>
</nav>
<footer class="status d-flex align-items-center">
  <span class="cell flex-grow-1 border-start-0 me-1">Для получения подсказки нажмите F1</span><span class="cell me-1" style="color:#aaa27a">CAP</span><span class="cell me-3">NUM</span>
  <svg width="12" height="12" viewBox="0 0 12 12"><path d="M0 12L12 0M4 12l8-8M8 12l4-4" stroke="#bdb694" stroke-width="1.500"/></svg>
</footer>
</div>
<script src="https://cdn.jsdelivr.net/npm/bootstrap@5.3.0/dist/js/bootstrap.bundle.min.js"></script>
</body>
</html>
